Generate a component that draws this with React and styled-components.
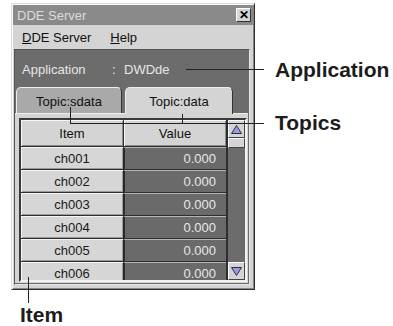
import React from 'react';
import styled, { createGlobalStyle } from 'styled-components';

const GlobalStyle = createGlobalStyle`
  body {
    margin: 0;
    background: #fff;
    font-family: "Liberation Sans", Arial, sans-serif;
  }
`;

const Stage = styled.div`
  position: relative;
  width: 393px;
  height: 326px;
  overflow: hidden;
  padding-top: 3px;
  box-sizing: border-box;
`;

const Window = styled.div`
  margin-left: 11px;
  width: 244px;
  height: 287px;
  box-sizing: border-box;
  display: flex;
  flex-direction: column;
  background: #d4d4d4;
  border: 1px solid;
  border-color: #dedede #2e2e2e #2e2e2e #dedede;
  box-shadow: inset 1px 1px #fafafa, inset -1px -1px #858585;
  padding: 1px;
  font-size: 13px;
`;

const TitleBar = styled.div`
  height: 20px;
  display: flex;
  align-items: center;
  justify-content: space-between;
  background: #8a8a8a;
  color: #dcdcdc;
  padding-left: 4px;
`;

const CloseButton = styled.div`
  width: 15px;
  height: 14px;
  margin-right: 2px;
  box-sizing: border-box;
  display: flex;
  align-items: center;
  justify-content: center;
  background: #d4d4d4;
  border: 1px solid;
  border-color: #fff #333 #333 #fff;
  color: #000;
  font-weight: bold;
  font-size: 12px;
  line-height: 1;
`;

const MenuBar = styled.div`
  height: 24px;
  display: flex;
  align-items: center;
  padding-left: 9px;
  color: #111;
`;

const MenuItem = styled.span`
  margin-right: 19px;
  u { text-decoration: underline; }
`;

const Client = styled.div`
  flex: 1;
  margin: 0 3px 3px 1px;
  display: flex;
  flex-direction: column;
  background: #6c6c6c;
  border: 1px solid;
  border-color: #555 #e6e6e6 #e6e6e6 #555;
`;

const AppRow = styled.div`
  height: 37px;
  display: flex;
  align-items: center;
  padding: 2px 0 0 7px;
  box-sizing: border-box;
  color: #e6e6e6;
`;

const AppName = styled.span`
  width: 90px;
`;

const Colon = styled.span`
  width: 12px;
`;

const TabRow = styled.div`
  height: 26px;
  display: flex;
  gap: 3px;
  padding-left: 1px;
`;

const Tab = styled.div`
  width: ${p => p.$w}px;
  box-sizing: border-box;
  display: flex;
  justify-content: center;
  padding-top: 6px;
  color: #111;
  background: ${p => (p.$active ? '#d4d4d4' : '#a9a9a9')};
  border: 1px solid;
  border-bottom: none;
  border-color: #eee #333 transparent #eee;
  border-radius: 5px 5px 0 0;
  height: ${p => (p.$active ? 27 : 26)}px;
  position: relative;
  z-index: ${p => (p.$active ? 1 : 0)};
`;

const Panel = styled.div`
  height: 170px;
  margin-right: 1px;
  box-sizing: border-box;
  padding: 4px 1px 2px 4px;
  background: #d4d4d4;
  border-top: 1px solid #eee;
`;

const GridBox = styled.div`
  height: 164px;
  box-sizing: border-box;
  display: flex;
  gap: 2px;
  overflow: hidden;
  background: #2e2e2e;
  border: 2px solid;
  border-color: #3a3a3a #f2f2f2 #f2f2f2 #3a3a3a;
`;

const Cells = styled.div`
  width: 205px;
  display: flex;
  flex-direction: column;
  gap: 1px;
  background: #2e2e2e;
`;

const Row = styled.div`
  display: grid;
  grid-template-columns: 102px 103px;
  height: ${p => (p.$head ? 26 : 22)}px;
  flex-shrink: 0;
`;

const HeadCell = styled.div`
  display: flex;
  align-items: center;
  justify-content: center;
  background: #d4d4d4;
  color: #111;
  box-shadow: inset 1px 1px #f6f6f6, inset -1px -1px #8a8a8a;
  & + & { border-left: 1px solid #2e2e2e; }
`;

const ItemCell = styled.div`
  display: flex;
  align-items: center;
  justify-content: center;
  background: #d6d6d6;
  color: #1a1a1a;
  box-shadow: inset 1px 1px #f6f6f6, inset -1px -1px #9a9a9a;
`;

const ValueCell = styled.div`
  display: flex;
  align-items: center;
  justify-content: flex-end;
  padding-right: 10px;
  background: #6a6a6a;
  color: #e8e8e8;
  border-left: 2px solid #2a2a2a;
  border-top: 1px solid #b4b4b4;
`;

const ScrollBar = styled.div`
  width: 17px;
  display: flex;
  flex-direction: column;
  background: #6c6c6c;
`;

const ScrollButton = styled.div`
  height: ${p => p.$h}px;
  box-sizing: border-box;
  display: flex;
  align-items: center;
  justify-content: center;
  background: #d4d4d4;
  border: 1px solid;
  border-color: #fafafa #444 #444 #fafafa;
  flex-shrink: 0;
`;

const Track = styled.div`
  flex: 1;
`;

const Line = styled.div`
  position: absolute;
  background: #222;
  left: ${p => p.$x}px;
  top: ${p => p.$y}px;
  width: ${p => p.$w || 1}px;
  height: ${p => p.$h || 1}px;
`;

const Label = styled.div`
  position: absolute;
  left: ${p => p.$x}px;
  top: ${p => p.$y}px;
  font-size: 21px;
  line-height: 18px;
  font-weight: bold;
  color: #1c1c1c;
`;

const Arrow = ({ down }) => (
  <svg width="11" height="9" viewBox="0 0 11 9">
    <polygon
      points={down ? '0.5,0.5 10.5,0.5 5.5,8.5' : '5.5,0.5 10.5,8.5 0.5,8.5'}
      fill="#9c9cd8"
      stroke="#2a2a4a"
    />
  </svg>
);

const rows = ['ch001', 'ch002', 'ch003', 'ch004', 'ch005', 'ch006'];

export default function App() {
  return (
    <Stage>
      <GlobalStyle />
      <Window>
        <TitleBar>
          DDE Server
          <CloseButton>✕</CloseButton>
        </TitleBar>
        <MenuBar>
          <MenuItem><u>D</u>DE Server</MenuItem>
          <MenuItem><u>H</u>elp</MenuItem>
        </MenuBar>
        <Client>
          <AppRow>
            <AppName>Application</AppName>
            <Colon>:</Colon>
            <span>DWDde</span>
          </AppRow>
          <TabRow>
            <Tab $w={106}>Topic:sdata</Tab>
            <Tab $w={108} $active>Topic:data</Tab>
          </TabRow>
          <Panel>
            <GridBox>
              <Cells>
                <Row $head>
                  <HeadCell>Item</HeadCell>
                  <HeadCell>Value</HeadCell>
                </Row>
                {rows.map(r => (
                  <Row key={r}>
                    <ItemCell>{r}</ItemCell>
                    <ValueCell>0.000</ValueCell>
                  </Row>
                ))}
              </Cells>
              <ScrollBar>
                <ScrollButton $h={18}><Arrow /></ScrollButton>
                <ScrollButton $h={10} />
                <Track />
                <ScrollButton $h={18}><Arrow down /></ScrollButton>
              </ScrollBar>
            </GridBox>
          </Panel>
        </Client>
      </Window>

      <Line $x={186} $y={69} $w={78} />
      <Label $x={275} $y={61}>Application</Label>

      <Line $x={70} $y={107} $h={17} />
      <Line $x={182} $y={107} $h={17} />
      <Line $x={70} $y={123} $w={194} />
      <Label $x={275} $y={114}>Topics</Label>

      <Line $x={28} $y={277} $h={26} />
      <Label $x={20} $y={306}>Item</Label>
    </Stage>
  );
}
